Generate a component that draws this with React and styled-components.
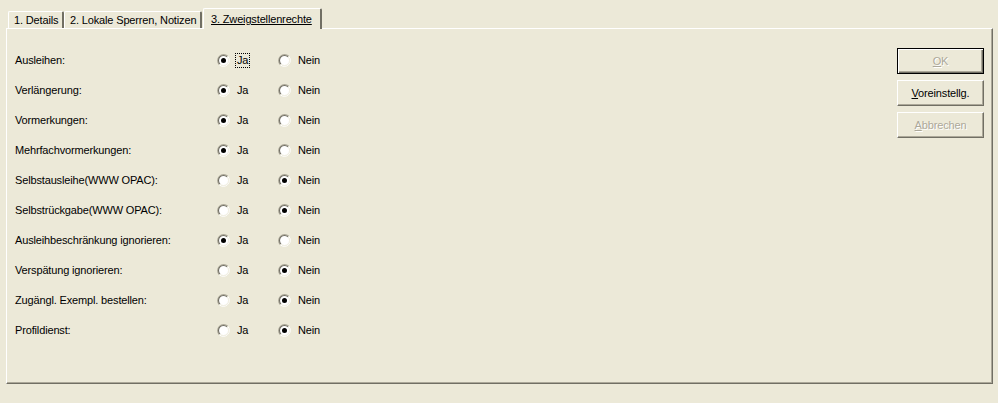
import React, { useState } from "react";
import styled, { createGlobalStyle } from "styled-components";

const GlobalStyle = createGlobalStyle`
  body {
    margin: 0;
    background: #ece9d8;
    font-family: "Liberation Sans", Arial, sans-serif;
    font-size: 11px;
    letter-spacing: -0.15px;
    color: #000;
  }
`;

const Window = styled.div`
  width: 998px;
  height: 403px;
  background: #ece9d8;
  box-sizing: border-box;
  padding: 8px 5px 0 6px;
`;

const TabBar = styled.div`
  display: flex;
  align-items: flex-end;
  height: 20px;
  padding-left: 2px;
`;

const Tab = styled.div`
  position: relative;
  z-index: ${(p) => (p.$active ? 2 : 1)};
  box-sizing: border-box;
  width: ${(p) => p.$width}px;
  height: ${(p) => (p.$active ? 21 : 17)}px;
  margin-bottom: ${(p) => (p.$active ? -1 : 0)}px;
  margin-left: ${(p) => (p.$active ? 1 : 0)}px;
  padding: ${(p) => (p.$active ? "4px 0 0 7px" : "2px 0 0 5px")};
  background: #ece9d8;
  border-top: 1px solid #fff;
  border-left: 1px solid #fff;
  border-right: 2px solid #716f64;
  border-top-left-radius: 2px;
  border-top-right-radius: 2px;
  white-space: nowrap;
  text-decoration: ${(p) => (p.$active ? "underline" : "none")};
  line-height: 13px;
`;

const Panel = styled.div`
  box-sizing: border-box;
  height: 356px;
  border-top: 1px solid #fff;
  border-left: 1px solid #fff;
  border-right: 1px solid #716f64;
  border-bottom: 1px solid #716f64;
  box-shadow: inset -1px -1px 0 #aca899;
  display: flex;
  justify-content: space-between;
`;

const Form = styled.div`
  padding: 16px 0 0 8px;
  display: flex;
  flex-direction: column;
`;

const Row = styled.div`
  display: flex;
  align-items: center;
  height: 30px;
`;

const Label = styled.div`
  width: 202px;
`;

const RadioGroup = styled.div`
  display: flex;
  align-items: center;
`;

const RadioItem = styled.label`
  display: inline-flex;
  align-items: center;
  width: ${(p) => p.$width}px;
  cursor: default;
`;

const RadioText = styled.span`
  margin-left: 6px;
  padding: 0 1px;
  line-height: 13px;
  outline: ${(p) => (p.$focus ? "1px dotted #000" : "none")};
`;

const Buttons = styled.div`
  display: flex;
  flex-direction: column;
  gap: 6px;
  padding: 19px 8px 0 0;
`;

const Button = styled.div`
  box-sizing: border-box;
  width: 87px;
  height: 26px;
  display: flex;
  align-items: center;
  justify-content: center;
  background: #ece9d8;
  border: 1px solid;
  border-color: #fff #716f64 #716f64 #fff;
  box-shadow: inset -1px -1px 0 #aca899;
  color: ${(p) => (p.$disabled ? "#aca899" : "#000")};
  text-shadow: ${(p) => (p.$disabled ? "1px 1px 0 #fff" : "none")};
  ${(p) =>
    p.$default &&
    `border-color: #000; box-shadow: inset 1px 1px 0 #fff, inset -1px -1px 0 #716f64, inset -2px -2px 0 #aca899;`}

  u {
    text-decoration: underline;
  }
`;

const RadioIcon = ({ checked }) => (
  <svg width="13" height="13" viewBox="0 0 13 13">
    <circle cx="6.5" cy="6.5" r="5" fill="#fff" />
    <path d="M2.26 10.74 A6 6 0 0 1 10.74 2.26" stroke="#aca899" strokeWidth="1.1" fill="none" />
    <path d="M2.96 10.04 A5 5 0 0 1 10.04 2.96" stroke="#716f64" strokeWidth="1.1" fill="none" />
    <path d="M10.74 2.26 A6 6 0 0 1 2.26 10.74" stroke="#fff" strokeWidth="1" fill="none" />
    <path d="M10.04 2.96 A5 5 0 0 1 2.96 10.04" stroke="#f1efe2" strokeWidth="1" fill="none" />
    {checked && <circle cx="6.5" cy="6.5" r="2.5" fill="#000" />}
  </svg>
);

const rows = [
  ["Ausleihen:", true],
  ["Verlängerung:", true],
  ["Vormerkungen:", true],
  ["Mehrfachvormerkungen:", true],
  ["Selbstausleihe(WWW OPAC):", false],
  ["Selbstrückgabe(WWW OPAC):", false],
  ["Ausleihbeschränkung ignorieren:", true],
  ["Verspätung ignorieren:", false],
  ["Zugängl. Exempl. bestellen:", false],
  ["Profildienst:", false],
];

const App = () => {
  const [values, setValues] = useState(rows.map((r) => r[1]));

  const setValue = (i, v) => {
    const next = [...values];
    next[i] = v;
    setValues(next);
  };

  return (
    <Window>
      <GlobalStyle />
      <TabBar>
        <Tab $width={56}>1. Details</Tab>
        <Tab $width={138}>2. Lokale Sperren, Notizen</Tab>
        <Tab $width={119} $active>
          3. Zweigstellenrechte
        </Tab>
      </TabBar>
      <Panel>
        <Form>
          {rows.map(([label], i) => (
            <Row key={label}>
              <Label>{label}</Label>
              <RadioGroup>
                <RadioItem $width={61} onClick={() => setValue(i, true)}>
                  <RadioIcon checked={values[i]} />
                  <RadioText $focus={i === 0}>Ja</RadioText>
                </RadioItem>
                <RadioItem $width={60} onClick={() => setValue(i, false)}>
                  <RadioIcon checked={!values[i]} />
                  <RadioText>Nein</RadioText>
                </RadioItem>
              </RadioGroup>
            </Row>
          ))}
        </Form>
        <Buttons>
          <Button $disabled $default>
            <span><u>O</u>K</span>
          </Button>
          <Button>
            <span><u>V</u>oreinstellg.</span>
          </Button>
          <Button $disabled>
            <span><u>A</u>bbrechen</span>
          </Button>
        </Buttons>
      </Panel>
    </Window>
  );
};

export default App;
